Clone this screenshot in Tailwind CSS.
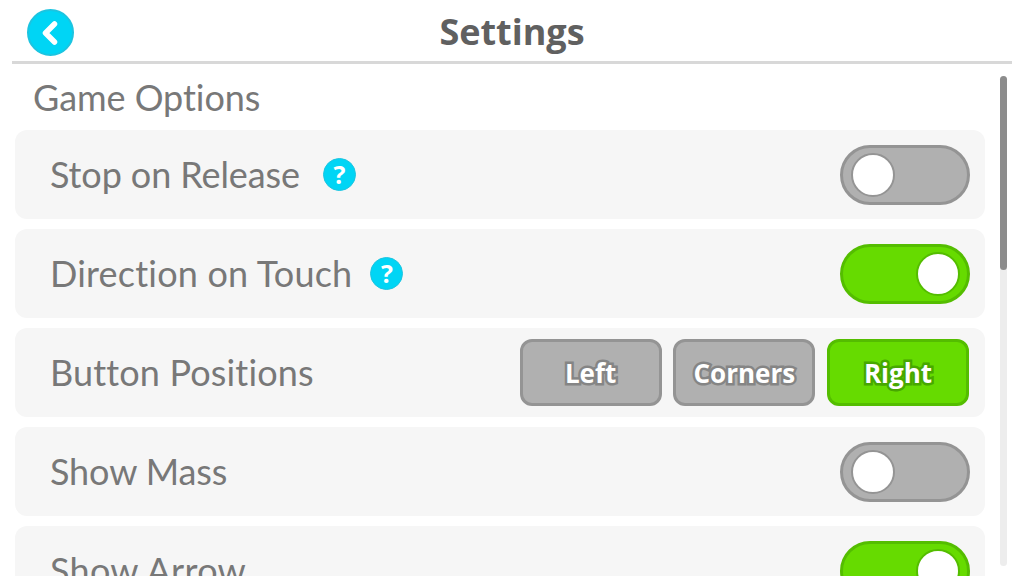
<!DOCTYPE html>
<html>
<head>
<meta charset="utf-8">
<script src="https://cdn.jsdelivr.net/npm/@tailwindcss/browser@4"></script>
</head>
<body class="bg-white">
<div class="relative w-[1024px] h-[576px] overflow-hidden bg-white font-['Lato',sans-serif] text-[#787878]">
  <header class="relative mx-3 h-[64px] border-b-[3px] border-[#d8d8d8] flex items-center justify-center">
    <div class="absolute left-[15px] top-[9px] w-[47px] h-[47px] rounded-full bg-[#00d5f5] border-2 border-[#1cc4e0] flex items-center justify-center">
      <svg width="22" height="26" viewBox="0 0 22 26" fill="none"><path d="M14.5 4 L5.5 13 L14.5 22" stroke="#fff" stroke-width="5.5" stroke-linecap="round" stroke-linejoin="round"/></svg>
    </div>
    <h1 class="font-['Open_Sans',sans-serif] font-bold text-[36px] leading-none text-[#606060] pt-[2px]">Settings</h1>
  </header>
  <div class="pl-[15px] w-[985px]">
    <h2 class="pl-[18px] h-[66px] flex items-center text-[36px] leading-none tracking-[-0.05px]">Game Options</h2>
    <div class="flex flex-col gap-[10px]">
      <div class="h-[89px] rounded-[12px] bg-[#f6f6f6] flex items-center pl-[35px] pr-[15px]">
        <span class="text-[36px] leading-none tracking-[-0.1px] pb-[2px]">Stop on Release</span>
        <span class="ml-[23px] w-[33px] h-[33px] rounded-full bg-[#00d5f5] border border-[#1cc4e0] flex items-center justify-center font-['Open_Sans',sans-serif] font-bold text-[25px] leading-none text-white">?</span>
        <span class="ml-auto w-[130px] h-[60px] rounded-full bg-[#b0b0b0] border-[3px] border-[#949494] flex items-center justify-start pl-[8px]"><span class="w-[40px] h-[40px] rounded-full bg-white border-2 border-[#949494] box-content"></span></span>
      </div>
      <div class="h-[89px] rounded-[12px] bg-[#f6f6f6] flex items-center pl-[35px] pr-[15px]">
        <span class="text-[36px] leading-none tracking-[0.2px] pb-[2px]">Direction on Touch</span>
        <span class="ml-[18px] w-[33px] h-[33px] rounded-full bg-[#00d5f5] border border-[#1cc4e0] flex items-center justify-center font-['Open_Sans',sans-serif] font-bold text-[25px] leading-none text-white">?</span>
        <span class="ml-auto w-[130px] h-[60px] rounded-full bg-[#66db00] border-[3px] border-[#54bd00] flex items-center justify-end pr-[7px]"><span class="w-[40px] h-[40px] rounded-full bg-white border-2 border-[#54bd00] box-content"></span></span>
      </div>
      <div class="h-[89px] rounded-[12px] bg-[#f6f6f6] flex items-center pl-[35px] pr-[16px]">
        <span class="text-[36px] leading-none tracking-[0.15px] pb-[2px]">Button Positions</span>
        <div class="ml-auto flex gap-[11.7px] font-['Open_Sans',sans-serif] font-bold text-[26px] leading-none text-white">
          <span class="w-[142px] h-[67px] rounded-[12px] bg-[#b0b0b0] border-[3px] border-[#949494] flex items-center justify-center"><span class="[-webkit-text-stroke:5px_#858585] [paint-order:stroke_fill]">Left</span></span>
          <span class="w-[142px] h-[67px] rounded-[12px] bg-[#b0b0b0] border-[3px] border-[#949494] flex items-center justify-center"><span class="[-webkit-text-stroke:5px_#858585] [paint-order:stroke_fill]">Corners</span></span>
          <span class="w-[142px] h-[67px] rounded-[12px] bg-[#66db00] border-[3px] border-[#54bd00] flex items-center justify-center"><span class="[-webkit-text-stroke:5px_#47a800] [paint-order:stroke_fill]">Right</span></span>
        </div>
      </div>
      <div class="h-[89px] rounded-[12px] bg-[#f6f6f6] flex items-center pl-[35px] pr-[15px]">
        <span class="text-[36px] leading-none tracking-[-0.1px] pb-[2px]">Show Mass</span>
        <span class="ml-auto w-[130px] h-[60px] rounded-full bg-[#b0b0b0] border-[3px] border-[#949494] flex items-center justify-start pl-[8px]"><span class="w-[40px] h-[40px] rounded-full bg-white border-2 border-[#949494] box-content"></span></span>
      </div>
      <div class="h-[89px] rounded-[12px] bg-[#f6f6f6] flex items-center pl-[35px] pr-[15px]">
        <span class="text-[36px] leading-none tracking-[0.3px] pb-[2px]">Show Arrow</span>
        <span class="ml-auto w-[130px] h-[60px] rounded-full bg-[#66db00] border-[3px] border-[#54bd00] flex items-center justify-end pr-[7px]"><span class="w-[40px] h-[40px] rounded-full bg-white border-2 border-[#54bd00] box-content"></span></span>
      </div>
    </div>
  </div>
  <div class="absolute left-[1000px] top-[76px] w-[7px] h-[490px] rounded-full bg-[#ededed]">
    <div class="w-[7px] h-[194px] rounded-full bg-[#8c8c8c]"></div>
  </div>
</div>
</body>
</html>
